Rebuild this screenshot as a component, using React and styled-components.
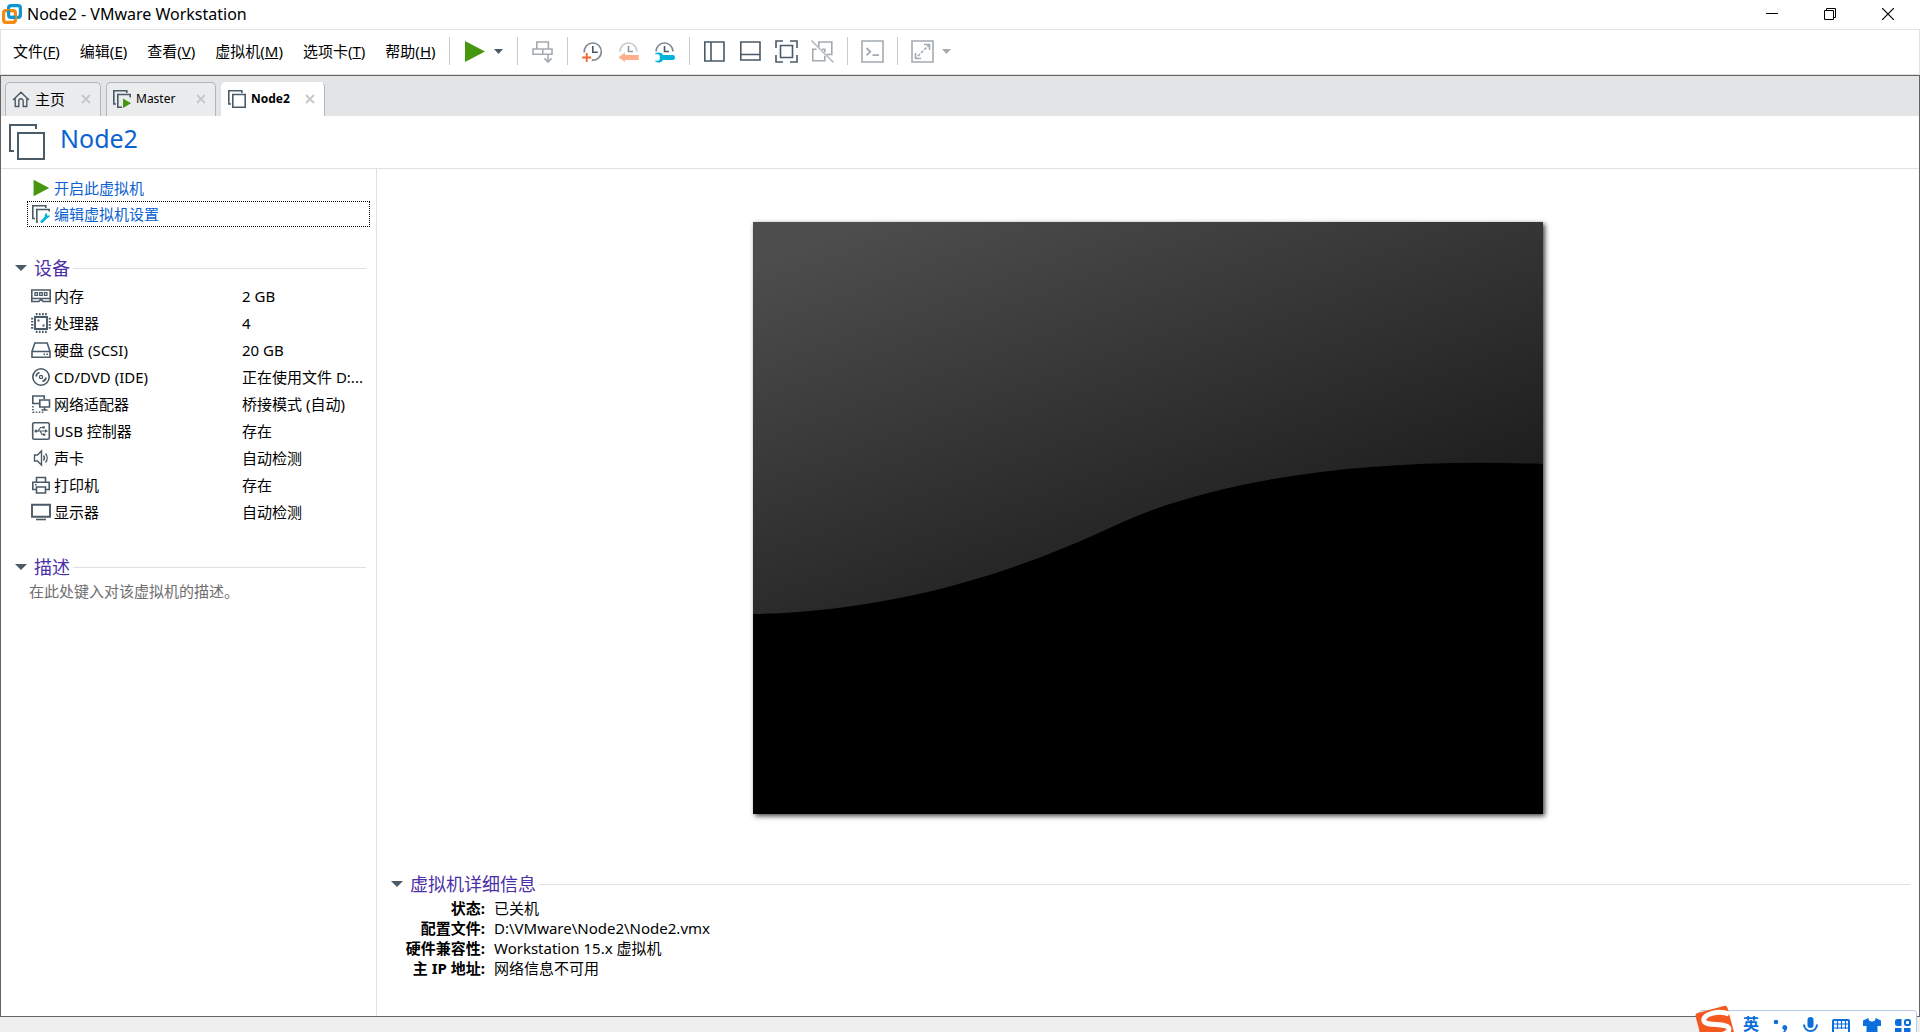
import React from 'react';
import styled, { createGlobalStyle } from 'styled-components';

const GlobalStyle = createGlobalStyle`
    * {
        box-sizing: border-box;
    }
    body {
        margin: 0;
        overflow: hidden;
        background: #fff;
        color: #000;
        font-family: 'Noto Sans', 'Noto Sans CJK SC', sans-serif;
        font-size: 15px;
        line-height: 20px;
    }
    button, textarea {
        padding: 0;
        border: 0;
        background: none;
        color: inherit;
        font: inherit;
    }
    svg {
        display: block;
        flex: none;
        fill: none;
    }
`;

const Window = styled.div`
    display: flex;
    flex-direction: column;
    min-height: 100vh;
`;

const TitleBar = styled.header`
    display: flex;
    align-items: center;
    height: 29px;
    padding: 0 3px 1px 2px;
`;

const WindowTitle = styled.h1`
    flex: 1;
    margin: 0 0 0 5px;
    font-size: 16px;
    font-weight: 400;
`;

const WindowButton = styled.button`
    display: flex;
    align-items: center;
    justify-content: center;
    width: 58px;
    height: 28px;
`;

const Toolbar = styled.nav`
    display: flex;
    align-items: center;
    height: 46px;
    padding: 0 0 2px 12px;
    border: 1px solid #e1e1e1;
`;

const MenuList = styled.div`
    display: flex;
    gap: 20px;
`;

const MenuButton = styled.button`
    white-space: nowrap;
`;

const Separator = styled.span`
    width: 1px;
    height: 28px;
    margin: 0 13px;
    background: #cbcbcd;
`;

const ToolGroup = styled.div`
    display: flex;
    align-items: center;
    gap: ${(props) => props.$gap || 13}px;
`;

const ToolButton = styled.button`
    display: flex;
`;

const Frame = styled.main`
    flex: 1;
    display: flex;
    flex-direction: column;
    border: 1px solid #636466;
`;

const TabStrip = styled.div`
    display: flex;
    align-items: flex-end;
    gap: 5px;
    height: 40px;
    padding-left: 4px;
    background: #e3e4e6;
`;

const Tab = styled.div`
    display: flex;
    align-items: center;
    width: ${(props) => props.$width}px;
    height: 34px;
    padding: 0 9px 2px 6px;
    border: 1px solid ${(props) => (props.$active ? '#fff' : '#b4b5b7')};
    border-right-color: #b4b5b7;
    border-bottom: 0;
    border-radius: 5px 5px 0 0;
    background: ${(props) => (props.$active ? '#fff' : '#ebecee')};
`;

const TabButton = styled.button`
    flex: 1;
    display: flex;
    align-items: center;
    gap: 5px;
    font-size: ${(props) => props.$size}px;
    font-weight: ${(props) => (props.$active ? 700 : 400)};
    white-space: nowrap;
`;

const CloseButton = styled.button`
    display: flex;
`;

const VmHeader = styled.div`
    display: flex;
    gap: 15px;
    height: 53px;
    padding: 8px 8px 0;
    border-bottom: 1px solid #e1e1e3;
`;

const VmName = styled.h2`
    margin: 0;
    color: #0b62d0;
    font-size: 25px;
    font-weight: 400;
    line-height: 28px;
`;

const Body = styled.div`
    flex: 1;
    display: flex;
`;

const Sidebar = styled.aside`
    width: 376px;
    padding: 6px 6px 0 14px;
    border-right: 1px solid #e1e1e3;
`;

const Actions = styled.div`
    display: flex;
    flex-direction: column;
    margin: 0 0 27px 12px;
`;

const ActionLink = styled.a`
    display: flex;
    align-items: center;
    gap: 4px;
    height: 26px;
    padding-left: 4px;
    border: 1px dotted ${(props) => (props.$focused ? '#000' : 'transparent')};
    color: #0b62d0;
    text-decoration: none;
`;

const SectionHeader = styled.div`
    display: flex;
    align-items: center;
    height: 28px;
    gap: 3px;
`;

const SectionButton = styled.button`
    display: flex;
    align-items: center;
    gap: 7px;
    color: #4b2fa8;
    font-size: 18px;
    line-height: 24px;
`;

const Rule = styled.span`
    flex: 1;
    height: 1px;
    background: #e0e0e2;
`;

const Section = styled.section`
    margin-right: 4px;
    margin-bottom: 28px;
`;

const DeviceTable = styled.table`
    width: 100%;
    border-collapse: collapse;
    table-layout: fixed;
    th, td {
        height: 27px;
        padding: 0;
        font-weight: 400;
        text-align: left;
        white-space: nowrap;
    }
    th {
        width: 227px;
        padding-left: 16px;
    }
`;

const DeviceName = styled.span`
    display: flex;
    align-items: center;
    gap: 3px;
`;

const Description = styled.textarea`
    display: block;
    width: 100%;
    height: 20px;
    padding-left: 14px;
    resize: none;
    &::placeholder {
        color: #6e6e6e;
        opacity: 1;
    }
`;

const Content = styled.div`
    flex: 1;
    display: flex;
    flex-direction: column;
    min-width: 0;
`;

const Preview = styled.div`
    flex: 1;
    display: flex;
    align-items: center;
    justify-content: center;
`;

const Screen = styled.svg`
    width: 100%;
    max-width: 790px;
    height: auto;
    box-shadow: 2px 2px 5px rgba(0, 0, 0, 0.75);
`;

const Details = styled.section`
    padding: 4px 9px 38px 14px;
`;

const DetailList = styled.dl`
    display: grid;
    grid-template-columns: 94px 1fr;
    column-gap: 9px;
    margin: 0;
    dt {
        font-weight: 700;
        text-align: right;
        white-space: nowrap;
    }
    dd {
        margin: 0;
    }
`;

const StatusBar = styled.footer`
    height: 15px;
    background: #efefef;
`;

const ImeBar = styled.div`
    position: fixed;
    right: 3px;
    bottom: -16px;
    display: flex;
    align-items: flex-start;
    gap: 13px;
    height: 38px;
    padding: 5px 5px 0 43px;
    border: 1px solid #b5cbe6;
    border-radius: 3px;
    background: #fff;
    color: #0a6fdb;
`;

const ImeLogo = styled.svg`
    position: absolute;
    left: -6px;
    top: -6px;
`;

const ImeButton = styled.button`
    display: flex;
    font-size: 16px;
    font-weight: 700;
    line-height: 16px;
`;

const slate = '#4a5a67';
const faded = '#a3abb1';

const Caret = () => (
    <svg width="12" height="12" viewBox="0 0 12 12">
        <path d="M0 3h12L6 9z" fill={slate} />
    </svg>
);

const SmallCaret = ({ color = slate }) => (
    <svg width="11" height="11" viewBox="0 0 11 11">
        <path d="M1 3h9L5.5 8z" fill={color} />
    </svg>
);

const Logo = () => (
    <svg width="20" height="20" viewBox="0 0 20 20" strokeWidth="3.2">
        <rect x="6.6" y="1.6" width="11.8" height="11.8" rx="2.4" stroke="#0e95d3" />
        <rect x="1.6" y="6.6" width="11.8" height="11.8" rx="2.4" stroke="#f38b13" />
        <path d="M6.6 9V6.4M13.4 13.4H10" stroke="#0e95d3" />
    </svg>
);

const Tool = ({ children, color = slate }) => (
    <svg width="23" height="23" viewBox="0 0 23 23" stroke={color} strokeWidth="1.6">
        {children}
    </svg>
);

const Play = ({ size = 23 }) => (
    <svg width={size} height={size} viewBox="0 0 23 23">
        <path d="M2 1v21l20-10.5z" fill="#47960f" />
    </svg>
);

const SendKeys = () => (
    <Tool color={faded}>
        <path d="M5.8 8.6V2h11.6v6.6M2 9h19v5.3H2zM11.8 9v5.3M17 14.5V22M13.4 18.4 17 22l3.6-3.6" />
    </Tool>
);

const TakeSnapshot = () => (
    <Tool color="#7c878f">
        <path d="M3.2 12.5a8.6 8.6 0 1 1 7.6 7.6" />
        <path d="M11.8 6v6.2h5" stroke={slate} />
        <path d="M5.7 13v9M1.2 17.5h9" stroke="#f0662a" strokeWidth="1.8" />
    </Tool>
);

const RevertSnapshot = () => (
    <Tool color="#c3c8cc">
        <path d="M2.9 11.5a8.5 8.5 0 0 1 17 0" />
        <path d="M11.5 6v5.5H16" stroke="#8b949b" />
        <path d="M1.5 17.3 8 12.6v2.3h13.8v5H8V22z" fill="#ffaf8c" stroke="none" />
    </Tool>
);

const ManageSnapshots = () => (
    <Tool color="#7c878f">
        <path d="M3 11.5a8.5 8.5 0 0 1 17 0" />
        <path d="M11.5 6v5.5H16" stroke={slate} />
        <path
            d="M1.6 14.2c2-2.4 6.8-2.4 8.4.7h9.9a2 2 0 0 1 2 2v1a2 2 0 0 1-2 2H10c-1.6 3.2-6.4 3.3-8.4.8h3.7l1.5-1.5v-3.4l-1.5-1.6z"
            fill="#00b3dc"
            stroke="none"
        />
    </Tool>
);

const ShowLibrary = () => (
    <Tool>
        <path d="M1.8 2H21v19H1.8zM8 2v19" />
    </Tool>
);

const ShowThumbnails = () => (
    <Tool>
        <path d="M1.8 2H21v18H1.8zM1.8 14.5H21" />
    </Tool>
);

const FullScreen = () => (
    <Tool>
        <path d="M8 1H1v7M15 1h7v7M8 22H1v-7M15 22h7v-7M5.5 5.5h12v12h-12z" />
    </Tool>
);

const Unity = () => (
    <Tool color={faded}>
        <path d="M7.8 7V2h13v12.5h-5M5.5 9.2H1.8v11.5h12v-5M11 9.2h2.8V12" />
        <path d="m.5.5 22 22" stroke="#b9bfc4" />
    </Tool>
);

const ConsoleView = () => (
    <Tool color={faded}>
        <path d="M1 1h21v21H1z" />
        <path d="m5.500 8 3.800 3.800-3.800 3.600M11.500 15.200H18" strokeWidth="1.8" />
    </Tool>
);

const Stretch = () => (
    <Tool color={faded}>
        <path d="M1 1h21v21H1zM13 4.500h5.500V10M4.500 13v5.500H10" />
        <path d="m18.500 4.500-14 14" strokeDasharray="3 1.5" />
    </Tool>
);

const Small = ({ children, size = 18 }) => (
    <svg width={size} height={size} viewBox={`0 0 ${size} ${size}`} stroke={slate} strokeWidth="1.6">
        {children}
    </svg>
);

const HomeIcon = () => (
    <Small>
        <path d="M1 10 9 2.200l8 7.800M3.200 8.500v8h3.600V11a2.200 2.200 0 0 1 4.400 0v5.500h3.600v-8" strokeWidth="1.4" />
    </Small>
);

const VmIcon = ({ running }) => (
    <Small>
        <path d="M3 14H.8V.8h13V3" />
        <path d="M4.800 4.500h12.400v12.700H4.800z" />
        {running && (
            <>
                <path d="M9 7.500h9V18H9z" fill="#ebecee" stroke="none" />
                <path d="M10 8.500V18l8-4.700z" fill="#47960f" stroke="none" />
            </>
        )}
    </Small>
);

const SettingsIcon = () => (
    <Small>
        <path d="M3 13.500H.8V.8h13V3M6 17H4.800V4.500h12.400v2" />
        <path d="m9 17.500 6-6" stroke="#00b3dc" strokeWidth="2.6" />
        <path d="M18 10.500a3.200 3.200 0 0 1-5 1.800 3 3 0 0 1 2-4.300v2.500z" fill="#00b3dc" stroke="none" />
    </Small>
);

const CloseIcon = () => (
    <svg width="10" height="10" viewBox="0 0 10 10" stroke="#c6c7c9" strokeWidth="1.8">
        <path d="m1 1 8 8M9 1 1 9" />
    </svg>
);

const deviceIcons = {
    memory: (
        <>
            <path d="M.8 4h18.400v11.500H12L10.800 14H9.200L8 15.500H.8zM1 12.500h18" />
            <path d="M4 6.700h2.500v2.600H4zM8.700 6.700h2.500v2.600H8.700zM13.400 6.700h2.500v2.600h-2.500z" strokeWidth="1.3" />
        </>
    ),
    cpu: (
        <>
            <path d="M4 4h12v12H4z" strokeWidth="1.9" />
            <path
                d="M4.800 1.200h11M4.800 18.800h11M1.200 4.800v11M18.800 4.800v11"
                strokeWidth="2.2"
                strokeDasharray="1.7 1.4"
            />
            <path d="M6.500 6.500h2v2h-2zM11.500 11.500h2v2h-2z" fill={slate} stroke="none" />
        </>
    ),
    disk: (
        <>
            <path d="M1 11.500 3.800 3h12.400l2.800 8.500M1 11.500h18v5.700H1z" />
            <path d="M12.500 14.300h1.500M15.500 14.300H17" />
        </>
    ),
    cd: (
        <>
            <circle cx="10" cy="10" r="8.2" />
            <circle cx="10" cy="10" r="1.6" strokeWidth="1.3" />
            <path d="M5 9.500A5 5 0 0 1 8.500 5.500M15 10.500a5 5 0 0 1-3.500 4" />
        </>
    ),
    network: (
        <>
            <path d="M8 9.500H1.800V2h11.400v3M8.800 6h9.700v7H8.800zM13.500 13v3M10.500 16h6" />
            <path d="M2 12v6.200h11.500" strokeDasharray="1.5 1.5" />
        </>
    ),
    usb: (
        <>
            <rect x="1.7" y="1.7" width="16.6" height="16.6" rx="1.5" />
            <path d="M4.500 10H14M7 10l2.500-3.500H12M9 10l2 3.500h2" strokeWidth="1.2" />
            <path
                d="M3.500 10a1.500 1.500 0 0 0 3 0 1.500 1.500 0 0 0-3 0M14 8.200l3 1.800-3 1.800zM11.500 5.300h2.300v2.300h-2.300zM12 12.400h2.300v2.300H12z"
                fill={slate}
                stroke="none"
            />
        </>
    ),
    sound: (
        <path d="M3.500 7h3l4-4v14l-4-4h-3zM12.500 7.500a4 4 0 0 1 0 5M14.500 5.500a7 7 0 0 1 0 9" strokeWidth="1.4" />
    ),
    printer: (
        <path d="M5.500 7V2.500h9V7M5 14.500H1.800V7.200h16.400v7.300H15M5.500 12h9v6h-9zM4 9.800h1.500" />
    ),
    display: (
        <>
            <path d="M1 2.800h18v12H1z" strokeWidth="1.9" />
            <path d="M5 17.500h10" />
        </>
    ),
};

const menus = [
    ['文件', 'F'],
    ['编辑', 'E'],
    ['查看', 'V'],
    ['虚拟机', 'M'],
    ['选项卡', 'T'],
    ['帮助', 'H'],
];

const devices = [
    ['memory', '内存', '2 GB'],
    ['cpu', '处理器', '4'],
    ['disk', '硬盘 (SCSI)', '20 GB'],
    ['cd', 'CD/DVD (IDE)', '正在使用文件 D:...'],
    ['network', '网络适配器', '桥接模式 (自动)'],
    ['usb', 'USB 控制器', '存在'],
    ['sound', '声卡', '自动检测'],
    ['printer', '打印机', '存在'],
    ['display', '显示器', '自动检测'],
];

const details = [
    ['状态:', '已关机'],
    ['配置文件:', 'D:\\VMware\\Node2\\Node2.vmx'],
    ['硬件兼容性:', 'Workstation 15.x 虚拟机'],
    ['主 IP 地址:', '网络信息不可用'],
];

const SectionTitle = ({ children }) => (
    <SectionHeader>
        <SectionButton aria-expanded="true">
            <Caret />
            {children}
        </SectionButton>
        <Rule />
    </SectionHeader>
);

const WindowTab = ({ icon, label, width, size, active }) => (
    <Tab $width={width} $active={active}>
        <TabButton $size={size} $active={active}>
            {icon}
            {label}
        </TabButton>
        <CloseButton aria-label="关闭">
            <CloseIcon />
        </CloseButton>
    </Tab>
);

const AppToolbar = () => (
    <Toolbar>
        <MenuList>
            {menus.map(([label, key]) => (
                <MenuButton key={key}>
                    {label}(<u>{key}</u>)
                </MenuButton>
            ))}
        </MenuList>
        <Separator />
        <ToolGroup $gap={7}>
            <ToolButton aria-label="开机"><Play /></ToolButton>
            <ToolButton aria-label="电源选项"><SmallCaret /></ToolButton>
        </ToolGroup>
        <Separator />
        <ToolButton aria-label="发送按键"><SendKeys /></ToolButton>
        <Separator />
        <ToolGroup>
            <ToolButton aria-label="拍摄快照"><TakeSnapshot /></ToolButton>
            <ToolButton aria-label="恢复快照"><RevertSnapshot /></ToolButton>
            <ToolButton aria-label="管理快照"><ManageSnapshots /></ToolButton>
        </ToolGroup>
        <Separator />
        <ToolGroup>
            <ToolButton aria-label="显示库"><ShowLibrary /></ToolButton>
            <ToolButton aria-label="显示缩略图"><ShowThumbnails /></ToolButton>
            <ToolButton aria-label="全屏"><FullScreen /></ToolButton>
            <ToolButton aria-label="Unity"><Unity /></ToolButton>
        </ToolGroup>
        <Separator />
        <ToolButton aria-label="控制台"><ConsoleView /></ToolButton>
        <Separator />
        <ToolGroup $gap={7}>
            <ToolButton aria-label="拉伸"><Stretch /></ToolButton>
            <ToolButton aria-label="拉伸选项"><SmallCaret color={faded} /></ToolButton>
        </ToolGroup>
    </Toolbar>
);

const VmScreen = () => (
    <Screen viewBox="0 0 790 592">
        <defs>
            <linearGradient id="glare" gradientUnits="userSpaceOnUse" x1="14" y1="38" x2="190" y2="513">
                <stop offset="0" stopColor="#4d4d4d" />
                <stop offset="1" stopColor="#191919" />
            </linearGradient>
        </defs>
        <path d="M0 0h790v592H0z" fill="#000" />
        <path
            d="M0 0H790V242C620 235 462 256 361 304C265 349 145 389 0 392z"
            fill="url(#glare)"
        />
    </Screen>
);

const InputMethodBar = () => (
    <ImeBar>
        <ImeLogo width="44" height="44" viewBox="0 0 44 44">
            <rect x="5" y="4" width="33" height="36" rx="3" fill="#f4581f" transform="rotate(-15 21 22)" />
            <path
                d="M35 9C25 5 8 9 10 16c2 6 24 1 25 8 0 6-16 8-24 5"
                stroke="#fff"
                strokeWidth="5"
            />
        </ImeLogo>
        <ImeButton>英</ImeButton>
        <ImeButton aria-label="标点">
            <svg width="17" height="18" viewBox="0 0 17 18">
                <circle cx="4" cy="6" r="2.3" fill="currentColor" />
                <path
                    d="M10.300 11.500a2.500 2.500 0 1 1 4.700 1.300c-.5 2-1.800 3.300-3.500 4.200l-.5-1 1.500-2a2.500 2.500 0 0 1-2.200-2.500z"
                    fill="currentColor"
                />
            </svg>
        </ImeButton>
        <ImeButton aria-label="语音">
            <svg width="17" height="18" viewBox="0 0 17 18" stroke="currentColor" strokeWidth="2">
                <rect x="5.5" y="1" width="6" height="11" rx="3" fill="currentColor" stroke="none" />
                <path d="M2 8.500a6.500 6.500 0 0 0 13 0M8.500 15v3" />
            </svg>
        </ImeButton>
        <ImeButton aria-label="软键盘">
            <svg width="18" height="18" viewBox="0 0 18 18" stroke="currentColor" strokeWidth="1.2">
                <rect x="1" y="4" width="16" height="14" rx="1" strokeWidth="2" />
                <path d="M1 8h16M1 12h16M5.500 4v9M9.500 4v9M13.500 4v9" />
            </svg>
        </ImeButton>
        <ImeButton aria-label="皮肤">
            <svg width="18" height="18" viewBox="0 0 18 18">
                <path d="M0 4.500 5.500 2a3.500 3.500 0 0 0 7 0L18 4.500V10h-3.500v8h-11v-8H0z" fill="currentColor" />
            </svg>
        </ImeButton>
        <ImeButton aria-label="工具箱">
            <svg width="17" height="18" viewBox="0 0 17 18">
                <path
                    d="M3.500 3h4v7h-4A2.500 2.500 0 0 1 1 7.500v-2A2.500 2.500 0 0 1 3.500 3zM1 12h6.500v6H1zM10 12h6.500v6H10z"
                    fill="currentColor"
                />
                <rect x="11" y="4" width="5" height="5" rx="1.5" stroke="currentColor" strokeWidth="2" />
            </svg>
        </ImeButton>
    </ImeBar>
);

const App = () => {
    return (
        <Window>
            <GlobalStyle />
            <TitleBar>
                <Logo />
                <WindowTitle>Node2 - VMware Workstation</WindowTitle>
                <WindowButton aria-label="最小化">
                    <svg width="12" height="12" viewBox="0 0 12 12" stroke="#000">
                        <path d="M0 5.500h12" />
                    </svg>
                </WindowButton>
                <WindowButton aria-label="还原">
                    <svg width="12" height="12" viewBox="0 0 12 12" stroke="#000">
                        <path d="M.5 2.500h9v9h-9zM2.500 2.500v-2h9v9h-2" />
                    </svg>
                </WindowButton>
                <WindowButton aria-label="关闭窗口">
                    <svg width="12" height="12" viewBox="0 0 12 12" stroke="#000" strokeWidth="1.2">
                        <path d="m0 0 12 12M12 0 0 12" />
                    </svg>
                </WindowButton>
            </TitleBar>
            <AppToolbar />
            <Frame>
                <TabStrip>
                    <WindowTab icon={<HomeIcon />} label="主页" width={96} size={15} />
                    <WindowTab icon={<VmIcon running />} label="Master" width={110} size={12} />
                    <WindowTab icon={<VmIcon />} label="Node2" width={104} size={12} active />
                </TabStrip>
                <VmHeader>
                    <svg width="36" height="36" viewBox="0 0 36 36" stroke={slate} strokeWidth="2">
                        <path d="M5 27H1V1h26v4M9 9h26v26H9z" />
                    </svg>
                    <VmName>Node2</VmName>
                </VmHeader>
                <Body>
                    <Sidebar>
                        <Actions>
                            <ActionLink href="#power">
                                <Play size={18} />
                                开启此虚拟机
                            </ActionLink>
                            <ActionLink href="#settings" $focused>
                                <SettingsIcon />
                                编辑虚拟机设置
                            </ActionLink>
                        </Actions>
                        <Section>
                            <SectionTitle>设备</SectionTitle>
                            <DeviceTable>
                                <tbody>
                                    {devices.map(([icon, name, value]) => (
                                        <tr key={icon}>
                                            <th scope="row">
                                                <DeviceName>
                                                    <Small size={20}>{deviceIcons[icon]}</Small>
                                                    {name}
                                                </DeviceName>
                                            </th>
                                            <td>{value}</td>
                                        </tr>
                                    ))}
                                </tbody>
                            </DeviceTable>
                        </Section>
                        <Section>
                            <SectionTitle>描述</SectionTitle>
                            <Description
                                aria-label="描述"
                                rows={1}
                                placeholder="在此处键入对该虚拟机的描述。"
                            />
                        </Section>
                    </Sidebar>
                    <Content>
                        <Preview>
                            <VmScreen />
                        </Preview>
                        <Details>
                            <SectionTitle>虚拟机详细信息</SectionTitle>
                            <DetailList>
                                {details.map(([label, value]) => (
                                    <React.Fragment key={label}>
                                        <dt>{label}</dt>
                                        <dd>{value}</dd>
                                    </React.Fragment>
                                ))}
                            </DetailList>
                        </Details>
                    </Content>
                </Body>
            </Frame>
            <StatusBar />
            <InputMethodBar />
        </Window>
    );
};

export default App;
